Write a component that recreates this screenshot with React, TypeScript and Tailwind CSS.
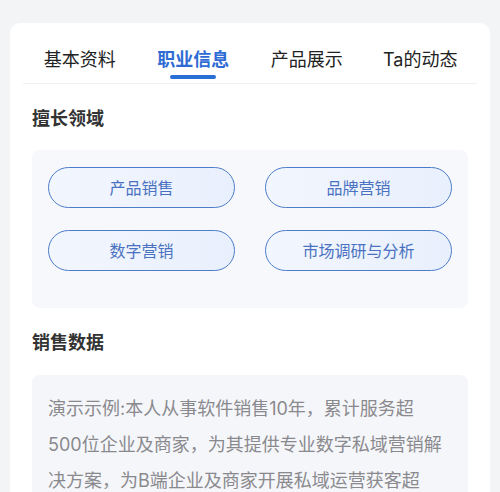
const TABS = ['基本资料', '职业信息', '产品展示', 'Ta的动态']
const SKILLS = ['产品销售', '品牌营销', '数字营销', '市场调研与分析']

const FONT = 'font-["Inter","Noto_Sans_CJK_SC",sans-serif]'

const SALES_LINES = [
  '演示示例:本人从事软件销售10年，累计服务超',
  '500位企业及商家，为其提供专业数字私域营销解',
  '决方案，为B端企业及商家开展私域运营获客超',
  '1000万，私域转化300万元，企业私域数字营销',
]

export default function App() {
  const active = 1
  return (
    <div className={`h-[492px] overflow-hidden bg-[#f3f4f6] px-[10px] pt-[23px] ${FONT}`}>
      <div className="rounded-t-[10px] bg-white px-[22px] pb-6">
        <div className="-mx-[9px] grid grid-cols-4 border-b border-[#f0f0f2] pt-[24px]">
          {TABS.map((tab, i) => (
            <div key={tab} className="flex flex-col items-center">
              <span
                className={`text-[18px] leading-[26px] ${
                  i === active ? 'font-bold text-[#2f6bd4]' : 'text-[#222]'
                }`}
              >
                {tab}
              </span>
              <span
                className={`mt-[2px] mb-[4px] h-[4px] w-[46px] rounded-full ${
                  i === active ? 'bg-[#2a6fd6]' : 'bg-transparent'
                }`}
              />
            </div>
          ))}
        </div>

        <h2 className="mt-[22px] text-[18px] font-bold leading-[26px] text-[#333]">擅长领域</h2>
        <div className="mt-[18px] grid grid-cols-2 gap-x-[30px] gap-y-[22px] rounded-[8px] bg-[#f7f8fc] px-4 pt-[17px] pb-[37px]">
          {SKILLS.map(skill => (
            <div
              key={skill}
              className="flex h-[41px] items-center justify-center rounded-full border border-[#4d7cc8] bg-gradient-to-r from-[#f2f6fe] to-[#e9f0fd] text-[16px] text-[#4a72c0]"
            >
              {skill}
            </div>
          ))}
        </div>

        <h2 className="mt-[22px] text-[18px] font-bold leading-[26px] text-[#333]">销售数据</h2>
        <div className="mt-[19px] rounded-[8px] bg-[#f5f6fa] px-4 pt-4 pb-4 text-[18px] leading-[36px] text-[#8a8a8e]">
          {SALES_LINES.map(line => (
            <div key={line} className="whitespace-nowrap">
              {line}
            </div>
          ))}
        </div>
      </div>
    </div>
  )
}
